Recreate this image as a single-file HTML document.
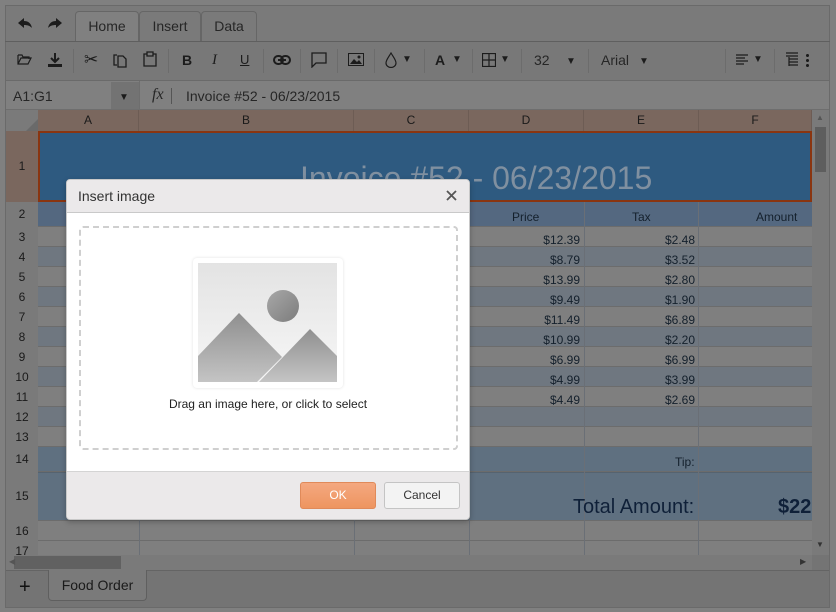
<!DOCTYPE html>
<html><head><meta charset="utf-8"><style>
*{box-sizing:border-box;margin:0;padding:0}
body{width:836px;height:612px;background:#808080;font-family:"Liberation Sans",Arial,sans-serif;position:relative;overflow:hidden;color:#1a1a1a}
.a{position:absolute}
.frame{left:5px;top:5px;width:825px;height:603px;background:#7a7a7a;border:1px solid #6a6a6a}
.tab{top:11px;height:31px;border:1px solid #666;border-bottom:none;border-radius:4px 4px 0 0;font-size:14px;text-align:center;line-height:29px;color:#262626;background:#7a7a7a}
.tb{left:6px;top:41px;width:823px;height:40px;background:#787878;border-top:1px solid #5f5f5f;border-bottom:1px solid #6a6a6a}
.sep{top:49px;width:1px;height:24px;background:#6c6c6c}
.ic{top:52px;font-size:14px;color:#1c1c1c}
.fb{left:6px;top:81px;width:823px;height:29px;background:#808080;border-bottom:1px solid #6e6e6e}
.ch{top:110px;height:21px;background:#7a675e;font-size:12px;text-align:center;line-height:21px;color:#1a1a1a;border-right:1px solid #6d5c54}
.rh{left:6px;width:32px;text-align:center;font-size:12px;color:#1a1a1a;background:#7a7a7a}
.row{left:38px;width:774px;border-bottom:1px solid #6c6c6c}
.v{width:1px;background:#6a6f76}
.num{font-size:12px;text-align:right;color:#14202c}
</style></head><body>
<div class="a frame"></div>
<!-- tabs -->
<svg class="a" style="left:17px;top:17px" width="16" height="12"><path d="M7 1 L1 6 L7 11 V8 C11 8 13 9 15 11 C14 6 11 4 7 4 Z" fill="#1c1c1c"/></svg>
<svg class="a" style="left:47px;top:17px" width="16" height="12"><path d="M9 1 L15 6 L9 11 V8 C5 8 3 9 1 11 C2 6 5 4 9 4 Z" fill="#1c1c1c"/></svg>
<div class="a" style="left:5px;top:41px;width:825px;height:1px;background:#5f5f5f"></div>
<div class="a tab" style="left:75px;width:64px;background:#808080;height:31px">Home</div>
<div class="a tab" style="left:139px;width:62px">Insert</div>
<div class="a tab" style="left:201px;width:56px">Data</div>
<!-- toolbar -->
<div class="a tb"></div>
<svg class="a" style="left:17px;top:52px" width="16" height="14"><path d="M1 3 H5 L6 5 H12 V7 M1 3 V12 H11 L14 6 H4 L1 12" fill="none" stroke="#1c1c1c" stroke-width="1.2"/></svg>
<svg class="a" style="left:47px;top:52px" width="16" height="16"><path d="M8 1 V9 M4 6 L8 10 L12 6" stroke="#1c1c1c" stroke-width="2" fill="none"/><rect x="1" y="12" width="14" height="3" fill="#1c1c1c"/></svg>
<div class="a sep" style="left:73px"></div>
<div class="a ic" style="left:84px;top:50px;font-size:17px">&#x2702;</div>
<svg class="a" style="left:113px;top:52px" width="16" height="16"><path d="M4 3 H1 V13 H4 M5 4 H10 L13 7 V15 H5 Z" fill="none" stroke="#1c1c1c" stroke-width="1.3"/></svg>
<svg class="a" style="left:143px;top:51px" width="14" height="17"><path d="M4 3 H1 V15 H13 V3 H10 M4 1 H10 V5 H4 Z" fill="none" stroke="#1c1c1c" stroke-width="1.3"/></svg>
<div class="a sep" style="left:168px"></div>
<div class="a ic" style="left:182px;font-weight:bold">B</div>
<div class="a ic" style="left:212px;font-style:italic;font-family:'Liberation Serif',serif;font-size:15px">I</div>
<div class="a ic" style="left:240px;text-decoration:underline;font-size:13px">U</div>
<div class="a sep" style="left:263px"></div>
<svg class="a" style="left:273px;top:55px" width="18" height="10"><rect x="1" y="1" width="9" height="8" rx="4" fill="none" stroke="#1c1c1c" stroke-width="2"/><rect x="8" y="1" width="9" height="8" rx="4" fill="none" stroke="#1c1c1c" stroke-width="2"/><path d="M5 5 H13" stroke="#1c1c1c" stroke-width="2"/></svg>
<div class="a sep" style="left:300px"></div>
<svg class="a" style="left:311px;top:52px" width="17" height="16"><path d="M1 1 H15 V11 H5 L1 15 Z" fill="none" stroke="#1c1c1c" stroke-width="1.3"/></svg>
<div class="a sep" style="left:337px"></div>
<svg class="a" style="left:348px;top:53px" width="16" height="13"><rect x="0.5" y="0.5" width="15" height="12" fill="none" stroke="#1c1c1c"/><path d="M2 11 L6 6 L9 9 L11 7 L14 11 Z" fill="#1c1c1c"/><circle cx="11" cy="4" r="1.5" fill="#1c1c1c"/></svg>
<div class="a sep" style="left:374px"></div>
<svg class="a" style="left:385px;top:52px" width="12" height="16"><path d="M6 1 C3 6 1 8 1 11 A5 4.5 0 0 0 11 11 C11 8 9 6 6 1 Z" fill="none" stroke="#1c1c1c" stroke-width="1.2"/></svg>
<div class="a ic" style="left:402px;top:54px;font-size:10px">&#9660;</div>
<div class="a sep" style="left:424px"></div>
<div class="a ic" style="left:435px;font-weight:bold">A</div>
<div class="a ic" style="left:452px;top:54px;font-size:10px">&#9660;</div>
<div class="a sep" style="left:472px"></div>
<svg class="a" style="left:482px;top:53px" width="14" height="14"><path d="M0.5 0.5 H13.5 V13.5 H0.5 Z M7 0 V14 M0 7 H14" fill="none" stroke="#1c1c1c" stroke-width="1.2"/></svg>
<div class="a ic" style="left:500px;top:54px;font-size:10px">&#9660;</div>
<div class="a sep" style="left:521px"></div>
<div class="a ic" style="left:534px;font-size:14px;color:#262626">32</div>
<div class="a ic" style="left:566px;top:56px;font-size:10px">&#9660;</div>
<div class="a sep" style="left:588px"></div>
<div class="a ic" style="left:601px;font-size:14px;color:#262626">Arial</div>
<div class="a ic" style="left:639px;top:56px;font-size:10px">&#9660;</div>
<div class="a sep" style="left:725px"></div>
<svg class="a" style="left:736px;top:54px" width="12" height="12"><path d="M0 1H12M0 4H9M0 7H12M0 10H8" stroke="#1c1c1c" stroke-width="1.2"/></svg>
<div class="a ic" style="left:753px;top:54px;font-size:10px">&#9660;</div>
<div class="a sep" style="left:774px"></div>
<svg class="a" style="left:786px;top:52px" width="12" height="16"><path d="M0 1H12M0 4H12M3 7H12M3 10H12M3 13H12M3 5V14" stroke="#1c1c1c" stroke-width="1.2"/></svg>
<div class="a" style="left:806px;top:53px;width:3px;height:14px;background:radial-gradient(circle,#1c1c1c 1.4px,transparent 1.6px) 0 0/3px 5px"></div>
<!-- formula bar -->
<div class="a fb"></div>
<div class="a" style="left:6px;top:81px;width:134px;height:29px;border-right:1px solid #6e6e6e"></div>
<div class="a" style="left:111px;top:82px;width:28px;height:27px;background:#737373"></div>
<div class="a" style="left:13px;top:88px;font-size:14px;color:#262626">A1:G1</div>
<div class="a" style="left:119px;top:92px;font-size:10px">&#9660;</div>
<div class="a" style="left:152px;top:86px;font-size:16px;font-style:italic;font-family:'Liberation Serif',serif;color:#262626">fx</div>
<div class="a" style="left:171px;top:88px;width:1px;height:16px;background:#555"></div>
<div class="a" style="left:186px;top:88px;font-size:14px;color:#262626">Invoice #52 - 06/23/2015</div>
<!-- col headers -->
<div class="a" style="left:6px;top:110px;width:32px;height:21px;background:#7a7a7a"></div>
<div class="a" style="left:26px;top:119px;width:0;height:0;border-left:12px solid transparent;border-bottom:12px solid #6a6a6a"></div>
<div class="a ch" style="left:38px;width:101px">A</div>
<div class="a ch" style="left:139px;width:215px">B</div>
<div class="a ch" style="left:354px;width:115px">C</div>
<div class="a ch" style="left:469px;width:115px">D</div>
<div class="a ch" style="left:584px;width:115px">E</div>
<div class="a ch" style="left:699px;width:113px">F</div>
<!-- row headers -->
<div class="a rh" style="top:131px;height:71px;line-height:71px;background:#7a675e">1</div>
<div class="a rh" style="top:202px;height:25px;line-height:25px">2</div>
<div class="a rh" style="top:227px;height:20px;line-height:20px">3</div>
<div class="a rh" style="top:247px;height:20px;line-height:20px">4</div>
<div class="a rh" style="top:267px;height:20px;line-height:20px">5</div>
<div class="a rh" style="top:287px;height:20px;line-height:20px">6</div>
<div class="a rh" style="top:307px;height:20px;line-height:20px">7</div>
<div class="a rh" style="top:327px;height:20px;line-height:20px">8</div>
<div class="a rh" style="top:347px;height:20px;line-height:20px">9</div>
<div class="a rh" style="top:367px;height:20px;line-height:20px">10</div>
<div class="a rh" style="top:387px;height:20px;line-height:20px">11</div>
<div class="a rh" style="top:407px;height:20px;line-height:20px">12</div>
<div class="a rh" style="top:427px;height:20px;line-height:20px">13</div>
<div class="a rh" style="top:447px;height:25px;line-height:25px">14</div>
<div class="a rh" style="top:472px;height:49px;line-height:49px">15</div>
<div class="a rh" style="top:521px;height:20px;line-height:20px">16</div>
<div class="a rh" style="top:541px;height:14px;line-height:20px;overflow:hidden">17</div>
<!-- rows -->
<div class="a" style="left:38px;top:131px;width:774px;height:71px;background:#2e5a80;border:2px solid #8a3510"></div>
<div class="a" style="left:300px;top:160px;font-size:32px;color:#8090a0;white-space:nowrap">Invoice #52 - 06/23/2015</div>
<div class="a row" style="top:202px;height:25px;background:#546880"></div>
<div class="a row" style="top:227px;height:20px;background:#7f7f7f"></div>
<div class="a row" style="top:247px;height:20px;background:#6f7780"></div>
<div class="a row" style="top:267px;height:20px;background:#7f7f7f"></div>
<div class="a row" style="top:287px;height:20px;background:#6f7780"></div>
<div class="a row" style="top:307px;height:20px;background:#7f7f7f"></div>
<div class="a row" style="top:327px;height:20px;background:#6f7780"></div>
<div class="a row" style="top:347px;height:20px;background:#7f7f7f"></div>
<div class="a row" style="top:367px;height:20px;background:#6f7780"></div>
<div class="a row" style="top:387px;height:20px;background:#7f7f7f"></div>
<div class="a row" style="top:407px;height:20px;background:#6f7780"></div>
<div class="a row" style="top:427px;height:20px;background:#7f7f7f"></div>
<div class="a row" style="top:447px;height:25px;background:#5f7080"></div>
<div class="a row" style="top:472px;height:49px;background:#5f7080;border-top:1px solid #56636f"></div>
<div class="a row" style="top:521px;height:20px;background:#7f7f7f"></div>
<div class="a row" style="top:541px;height:14px;background:#7f7f7f;border:none"></div>
<div class="a v" style="left:139px;top:202px;height:353px"></div>
<div class="a v" style="left:354px;top:202px;height:353px"></div>
<div class="a v" style="left:469px;top:202px;height:353px"></div>
<div class="a v" style="left:584px;top:202px;height:353px"></div>
<div class="a v" style="left:698px;top:202px;height:353px"></div>
<div class="a" style="left:512px;top:210px;font-size:12px;color:#14202c">Price</div>
<div class="a" style="left:632px;top:210px;font-size:12px;color:#14202c">Tax</div>
<div class="a" style="left:756px;top:210px;font-size:12px;color:#14202c">Amount</div>
<div class="a" style="left:470px;top:230px;width:110px;line-height:20px">
<div class="num">$12.39</div><div class="num">$8.79</div><div class="num">$13.99</div><div class="num">$9.49</div><div class="num">$11.49</div><div class="num">$10.99</div><div class="num">$6.99</div><div class="num">$4.99</div><div class="num">$4.49</div></div>
<div class="a" style="left:585px;top:230px;width:110px;line-height:20px">
<div class="num">$2.48</div><div class="num">$3.52</div><div class="num">$2.80</div><div class="num">$1.90</div><div class="num">$6.89</div><div class="num">$2.20</div><div class="num">$6.99</div><div class="num">$3.99</div><div class="num">$2.69</div></div>
<div class="a" style="left:675px;top:455px;font-size:12px;color:#14202c">Tip:</div>
<div class="a" style="left:573px;top:496px;font-size:20px;color:#0f2038">Total Amount:</div>
<div class="a" style="left:778px;top:496px;font-size:20px;font-weight:bold;color:#0f2038">$22</div>
<!-- scrollbars -->
<div class="a" style="left:812px;top:110px;width:17px;height:445px;background:#7a7a7a"></div>
<div class="a" style="left:815px;top:127px;width:11px;height:45px;background:#5e5e5e"></div>
<div class="a" style="left:816px;top:113px;font-size:8px;color:#555">&#9650;</div>
<div class="a" style="left:816px;top:540px;font-size:8px;color:#333">&#9660;</div>
<div class="a" style="left:6px;top:555px;width:806px;height:15px;background:#7a7a7a"></div>
<div class="a" style="left:14px;top:556px;width:107px;height:13px;background:#616161"></div>
<div class="a" style="left:9px;top:557px;font-size:8px;color:#555">&#9664;</div>
<div class="a" style="left:800px;top:557px;font-size:8px;color:#333">&#9654;</div>
<div class="a" style="left:812px;top:555px;width:17px;height:15px;background:#747474"></div>
<!-- sheet bar -->
<div class="a" style="left:6px;top:570px;width:823px;height:37px;background:#747474;border-top:1px solid #646464"></div>
<div class="a" style="left:19px;top:576px;font-size:20px;color:#111">+</div>
<div class="a" style="left:48px;top:570px;width:99px;height:31px;background:#7a7a7a;border:1px solid #5f5f5f;border-top:none;border-radius:0 0 4px 4px;font-size:14px;text-align:center;line-height:30px;color:#1a1a1a">Food Order</div>
<!-- dialog -->
<div class="a" style="left:66px;top:179px;width:404px;height:341px;background:#fff;border:1px solid #c8c8c8;border-radius:4px;overflow:hidden;box-shadow:0 2px 6px rgba(0,0,0,.25)">
 <div style="height:33px;background:#ebe9ea;border-bottom:1px solid #c9c9c9;font-size:14px;color:#333;padding:8px 0 0 11px">Insert image</div>
 <svg class="a" style="left:379px;top:10px" width="11" height="11"><path d="M1 1 L10 10 M10 1 L1 10" stroke="#555" stroke-width="1.8"/></svg>
 <div class="a" style="left:12px;top:46px;width:379px;height:224px;border:2px dashed #cfcfcf;border-radius:4px"></div>
 <div class="a" style="left:126px;top:78px;width:150px;height:130px;background:#fff;border-radius:4px;box-shadow:0 0 3px rgba(0,0,0,.12)"></div>
 <svg class="a" style="left:131px;top:83px" width="140" height="120">
  <defs>
   <linearGradient id="bg" x1="0" y1="0" x2="0" y2="1"><stop offset="0" stop-color="#e3e3e3"/><stop offset="1" stop-color="#f7f7f7"/></linearGradient>
   <linearGradient id="mt" x1="0" y1="0" x2="0" y2="1"><stop offset="0" stop-color="#8f8f8f"/><stop offset="1" stop-color="#c4c4c4"/></linearGradient>
   <linearGradient id="sn" x1="0" y1="0" x2="1" y2="1"><stop offset="0" stop-color="#a8a8a8"/><stop offset="1" stop-color="#7c7c7c"/></linearGradient>
  </defs>
  <rect x="0" y="0" width="139" height="119" fill="url(#bg)"/>
  <path d="M0 93 L41 50 L84 94 L59 119 L0 119 Z" fill="url(#mt)"/>
  <path d="M61 119 L112 66 L139 93 L139 119 Z" fill="url(#mt)"/>
  <circle cx="85" cy="43" r="16" fill="url(#sn)"/>
 </svg>
 <div class="a" style="left:0;top:217px;width:402px;text-align:center;font-size:12px;color:#222">Drag an image here, or click to select</div>
 <div class="a" style="left:0;top:291px;width:402px;height:50px;background:#ebe9ea;border-top:1px solid #d4d4d4"></div>
 <div class="a" style="left:233px;top:302px;width:76px;height:27px;background:linear-gradient(#f4a880,#ee9560);border:1px solid #e08a5a;border-radius:3px;color:#fff;font-size:12px;text-align:center;line-height:25px">OK</div>
 <div class="a" style="left:317px;top:302px;width:76px;height:27px;background:#f3f3f3;border:1px solid #c4c4c4;border-radius:3px;color:#333;font-size:12px;text-align:center;line-height:25px">Cancel</div>
</div>
</body></html>
